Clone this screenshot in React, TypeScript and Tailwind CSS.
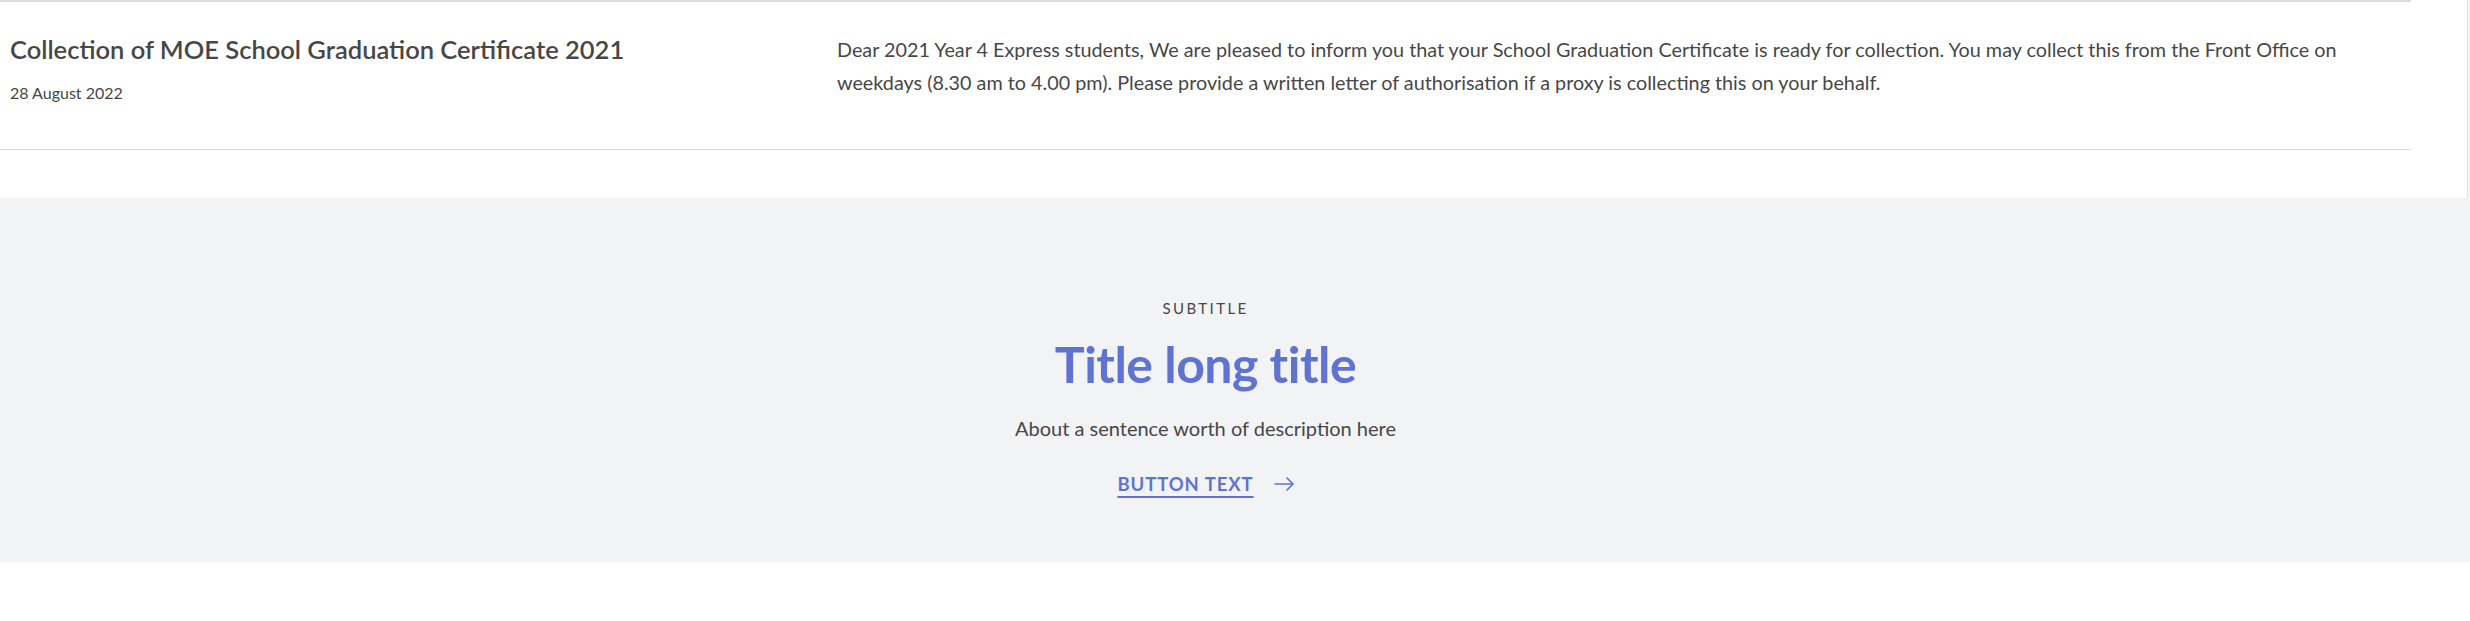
const announcement = {
  title: "Collection of MOE School Graduation Certificate 2021",
  date: "28 August 2022",
  body:
    "Dear 2021 Year 4 Express students, We are pleased to inform you that your School Graduation Certificate is ready for collection. You may collect this from the Front Office on weekdays (8.30 am to 4.00 pm). Please provide a written letter of authorisation if a proxy is collecting this on your behalf.",
};

function AnnouncementRow() {
  return (
    <div className="flex">
      <div className="flex-1 bg-white">
        <div className="w-[2411px] border-t-2 border-b border-[#dcdcdc]">
          <div className="flex pt-[31px] pb-[45px]">
            <div className="w-[837px] pl-[10px] pr-8">
              <h3 className="text-[25.5px] leading-[32px] font-semibold text-[#474747]">
                {announcement.title}
              </h3>
              <p className="mt-[17px] text-[16px] leading-[22px] text-[#474747]">
                {announcement.date}
              </p>
            </div>
            <div className="w-[1545px]">
              <p className="text-[19.8px] leading-[33px] text-[#474747]">
                {announcement.body}
              </p>
            </div>
          </div>
        </div>
        <div className="h-[48px]" />
      </div>
      <div className="w-[3px] border-l border-[#e2e2e2] bg-[#f4f4f5]" />
    </div>
  );
}

function InfoBanner() {
  return (
    <section className="bg-[#f2f3f5]">
      <div className="w-[2411px] pt-[100px] pb-[66px] flex flex-col items-center text-center">
        <p className="text-[15px] leading-[20px] tracking-[0.16em] text-[#474747]">
          SUBTITLE
        </p>
        <h2 className="mt-[16px] text-[50px] leading-[60px] font-bold tracking-[-0.01em] text-[#6073d1]">
          Title long title
        </h2>
        <p className="mt-[20px] text-[20px] leading-[28px] text-[#474747]">
          About a sentence worth of description here
        </p>
        <a
          href="#"
          className="mt-[30px] flex items-center gap-[20px] text-[#6073d1]"
        >
          <span className="text-[18.5px] leading-[24px] font-bold tracking-[0.05em] underline decoration-2 underline-offset-[5px]">
            BUTTON TEXT
          </span>
          <svg
            width="20"
            height="14"
            viewBox="0 0 20 14"
            fill="none"
            stroke="currentColor"
            strokeWidth="1.6"
            strokeLinecap="round"
            strokeLinejoin="round"
          >
            <path d="M1 7h18" />
            <path d="M13 1l6 6-6 6" />
          </svg>
        </a>
      </div>
    </section>
  );
}

export default function App() {
  return (
    <div
      className="min-h-[621px] bg-white"
      style={{ fontFamily: "Lato, 'Open Sans', sans-serif" }}
    >
      <AnnouncementRow />
      <InfoBanner />
    </div>
  );
}
